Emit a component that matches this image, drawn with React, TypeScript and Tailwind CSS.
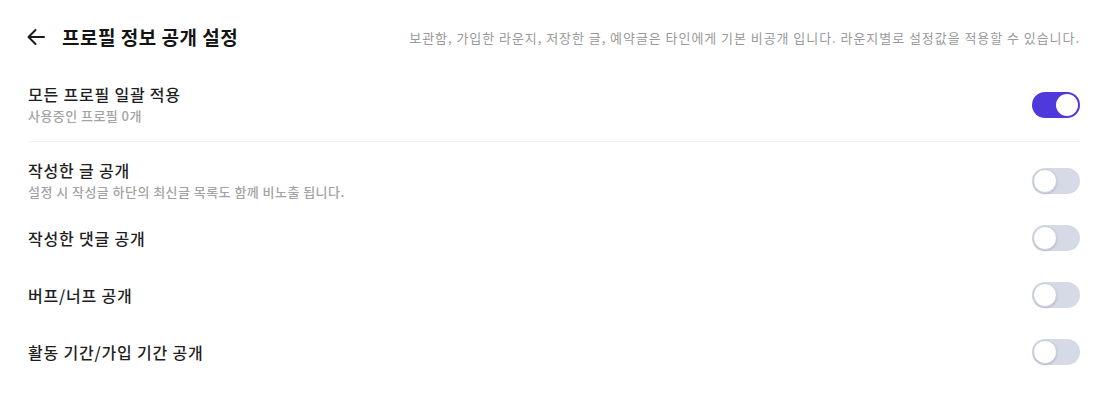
import React from "react";

const font = { fontFamily: '"Noto Sans CJK KR", "Noto Sans", sans-serif' };

function Toggle({ on }: { on: boolean }) {
  return (
    <div
      className={
        on
          ? "relative h-[26px] w-[48px] shrink-0 rounded-full bg-[#5039dc]"
          : "relative h-[26px] w-[48px] shrink-0 rounded-full bg-[#d6d9e6]"
      }
    >
      <div
        className={
          on
            ? "absolute right-[2px] top-[2px] h-[22px] w-[22px] rounded-full bg-white"
            : "absolute left-[1px] top-[1px] h-[24px] w-[24px] rounded-full border border-[#c9cddc] bg-white shadow-[0_1px_2px_rgba(120,125,150,0.35)]"
        }
      />
    </div>
  );
}

function Row({ title, sub, on = false }: { title: string; sub?: string; on?: boolean }) {
  return (
    <div className="flex h-[57px] items-center justify-between">
      <div className="flex flex-col">
        <div className="text-[16px] font-medium leading-[22px] tracking-[0.8px] text-[#1f1f1f]">{title}</div>
        {sub && (
          <div className="mt-[1px] text-[13px] font-medium leading-[20px] tracking-[0.45px] text-[#a3a3a3]">
            {sub}
          </div>
        )}
      </div>
      <Toggle on={on} />
    </div>
  );
}

export default function App() {
  return (
    <div className="min-h-[413px] w-[1098px] bg-white pl-[28px] pr-[18px] pt-[23px]" style={font}>
      <div className="flex h-[28px] items-center justify-between">
        <div className="flex items-center">
          <svg width="18" height="18" viewBox="0 0 18 18" fill="none" className="ml-[-1px]">
            <path d="M17 9H1.5M8.5 2L1.5 9L8.5 16" stroke="#1a1a1a" strokeWidth="2" strokeLinecap="round" strokeLinejoin="round" />
          </svg>
          <h1 className="ml-[17px] text-[19px] font-bold tracking-[0.5px] text-[#141414]">프로필 정보 공개 설정</h1>
        </div>
        <p className="pt-[2px] text-[13px] tracking-[0.95px] text-[#999999]">
          보관함, 가입한 라운지, 저장한 글, 예약글은 타인에게 기본 비공개 입니다. 라운지별로 설정값을 적용할 수 있습니다.
        </p>
      </div>
      <div className="mt-[25px] border-b border-[#f1f1f1] pb-[8px]">
        <Row title="모든 프로필 일괄 적용" sub="사용중인 프로필 0개" on />
      </div>
      <div className="mt-[10px] flex flex-col">
        <Row title="작성한 글 공개" sub="설정 시 작성글 하단의 최신글 목록도 함께 비노출 됩니다." />
        <Row title="작성한 댓글 공개" />
        <Row title="버프/너프 공개" />
        <Row title="활동 기간/가입 기간 공개" />
      </div>
    </div>
  );
}
